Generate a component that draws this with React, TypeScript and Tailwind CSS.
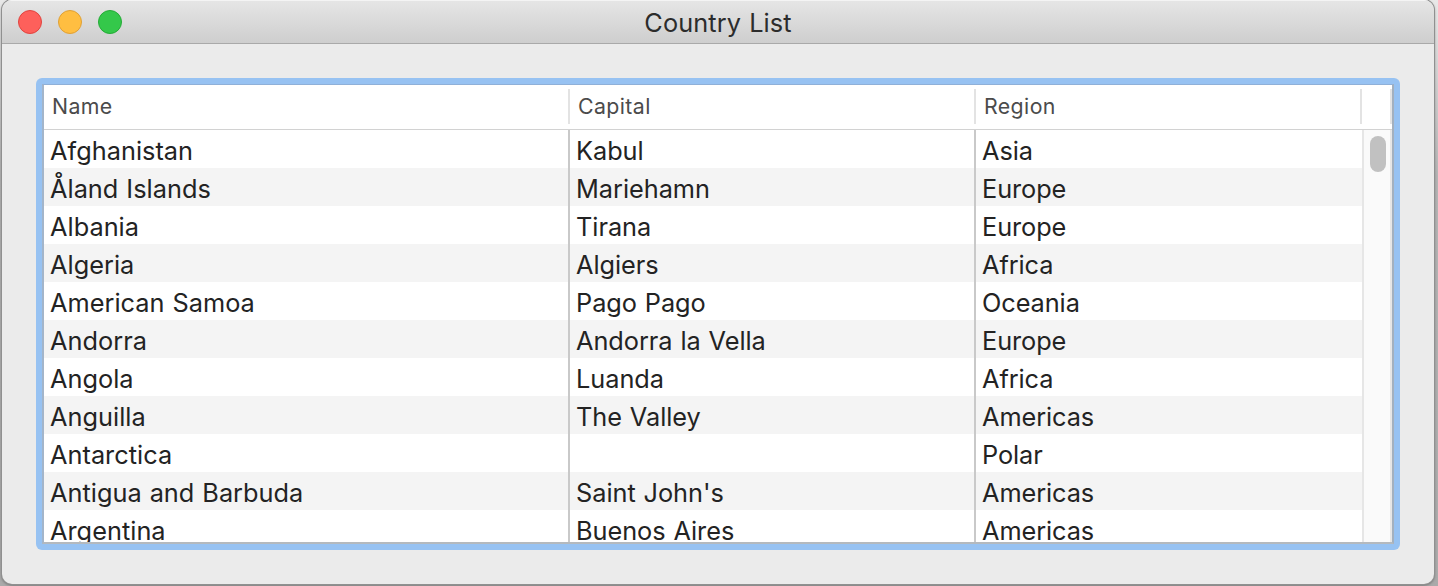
type Country = { name: string; capital: string; region: string };

const countries: Country[] = [
  { name: "Afghanistan", capital: "Kabul", region: "Asia" },
  { name: "Åland Islands", capital: "Mariehamn", region: "Europe" },
  { name: "Albania", capital: "Tirana", region: "Europe" },
  { name: "Algeria", capital: "Algiers", region: "Africa" },
  { name: "American Samoa", capital: "Pago Pago", region: "Oceania" },
  { name: "Andorra", capital: "Andorra la Vella", region: "Europe" },
  { name: "Angola", capital: "Luanda", region: "Africa" },
  { name: "Anguilla", capital: "The Valley", region: "Americas" },
  { name: "Antarctica", capital: "", region: "Polar" },
  { name: "Antigua and Barbuda", capital: "Saint John's", region: "Americas" },
  { name: "Argentina", capital: "Buenos Aires", region: "Americas" },
];

function TitleBar() {
  return (
    <header className="grid h-11 shrink-0 grid-cols-[1fr_auto_1fr] items-center border-b border-[#a9a9a9] bg-linear-to-b from-[#e6e6e6] to-[#cecece] shadow-[inset_0_1px_0_#f4f4f4]">
      <div className="flex gap-4 pl-4">
        <span className="size-6 rounded-full border border-[#e0443f] bg-[#fe605b]" />
        <span className="size-6 rounded-full border border-[#dfa036] bg-[#ffbe41]" />
        <span className="size-6 rounded-full border border-[#25ab37] bg-[#34c84a]" />
      </div>
      <h1 className="pt-0.5 text-[25.3px] leading-[42px] tracking-[0.1px] text-[#2c2c2c] [word-spacing:1px]">Country List</h1>
    </header>
  );
}

function ColumnHeader() {
  return (
    <div className="flex h-[45px] shrink-0 border-b border-[#d2d2d2] pt-1 pb-[5px] text-[21.3px] leading-[35px] tracking-[0.4px] text-[#4b4b4b]">
      <div className="w-[526px] border-r-2 border-[#e3e3e3] pl-2">Name</div>
      <div className="w-[406px] border-r-2 border-[#e3e3e3] pl-2">Capital</div>
      <div className="w-[386px] border-r-2 border-[#e3e3e3] pl-2">Region</div>
      <div className="w-[30px] border-r-2 border-[#e3e3e3]" />
    </div>
  );
}

function Rows() {
  return (
    <div className="w-[1318px] shrink-0">
      {countries.map((c) => (
        <div
          key={c.name}
          className="flex h-[38px] text-[25.3px] leading-[42px] whitespace-nowrap text-[#232323] [word-spacing:0.8px] odd:bg-white even:bg-[#f4f4f4]"
        >
          <div className="w-[526px] border-r-2 border-[#c9c9c9] pl-1.5 tracking-[0.03px]">{c.name}</div>
          <div className="w-[406px] border-r-2 border-[#c9c9c9] pl-1.5 tracking-[-0.03px]">{c.capital}</div>
          <div className="w-[386px] pl-1.5 tracking-[-0.07px]">{c.region}</div>
        </div>
      ))}
    </div>
  );
}

export default function App() {
  return (
    <div className="h-[586px] w-[1438px] overflow-hidden bg-linear-to-b from-[#e8e8e8] via-[#b4b4b4] via-30% to-[#aaaaaa] pl-0.5 font-['Inter','Liberation_Sans',sans-serif]">
      <div className="flex h-[584px] w-[1432px] flex-col overflow-hidden rounded-[10px] bg-[#ebebeb] shadow-[0_0_0_1px_#909090,0_1px_3px_#555]">
        <TitleBar />
        <main className="px-[34px] pt-[34px]">
          <div className="h-[472px] w-[1364px] rounded-md bg-[#97c2f2] p-1.5">
            <div className="flex h-[460px] flex-col overflow-hidden border-t border-r-2 border-b-2 border-l-2 border-t-[#8fb0d8] border-r-[#a3b0be] border-b-[#b4b9be] border-l-[#a3b5ca] bg-white">
              <ColumnHeader />
              <div className="flex h-[412px] overflow-hidden">
                <Rows />
                <div className="flex w-[30px] justify-center border-x-2 border-[#e6e6e6] bg-[#fafafa] pt-1.5 pl-px">
                  <div className="h-9 w-4 rounded-full bg-[#c1c1c1]" />
                </div>
              </div>
            </div>
          </div>
        </main>
      </div>
    </div>
  );
}
